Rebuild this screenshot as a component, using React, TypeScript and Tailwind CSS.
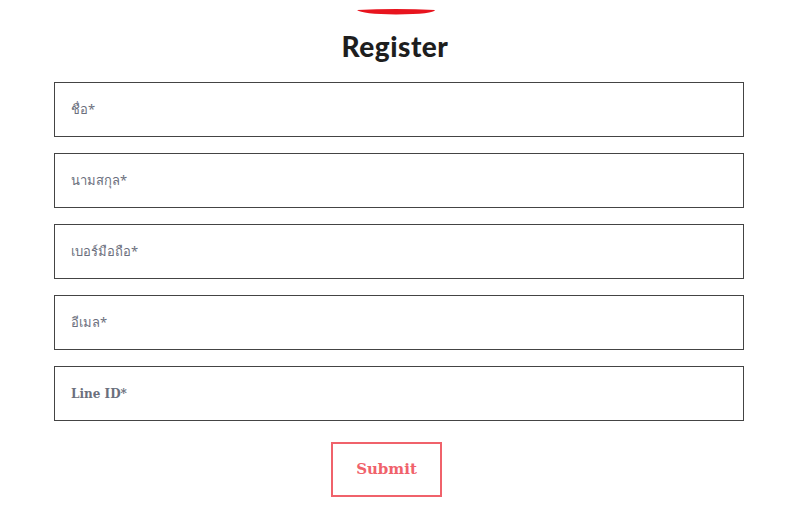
import React from "react";

const fields = ["ชื่อ*", "นามสกุล*", "เบอร์มือถือ*", "อีเมล*"];

export default function App() {
  return (
    <div className="w-[798px] h-[518px] bg-white flex flex-col items-center overflow-hidden">
      <svg width="80" height="8" viewBox="0 0 80 8" className="mt-[8px] mr-[6px]">
        <path d="M1 2 Q40 0 79 2 Q78 6 40 6.5 Q6 6 1 2 Z" fill="#e8141e" />
      </svg>
      <h1 className="mt-[12px] mr-[8px] text-[28px] leading-[36px] font-black text-[#1e1e1e] tracking-[0.5px] font-['Lato',sans-serif]">
        Register
      </h1>
      <form className="mt-[18px] w-[690px] flex flex-col gap-[16px]">
        {fields.map((f) => (
          <div
            key={f}
            className="h-[55px] border border-[#444] flex items-center px-[16px] text-[13px] text-[#6b6f7d] font-['Tahoma','Noto_Sans','DejaVu_Sans',sans-serif]"
          >
            {f}
          </div>
        ))}
        <div className="h-[55px] border border-[#444] flex items-center px-[16px] text-[12px] font-bold text-[#6b6f7d] font-['DejaVu_Serif',serif]">
          Line ID*
        </div>
      </form>
      <button className="mt-[21px] mr-[25px] w-[111px] h-[55px] border-2 border-[#f0626b] text-[#f0626b] text-[15px] font-bold flex items-center justify-center font-['DejaVu_Serif',serif]">
        Submit
      </button>
    </div>
  );
}
